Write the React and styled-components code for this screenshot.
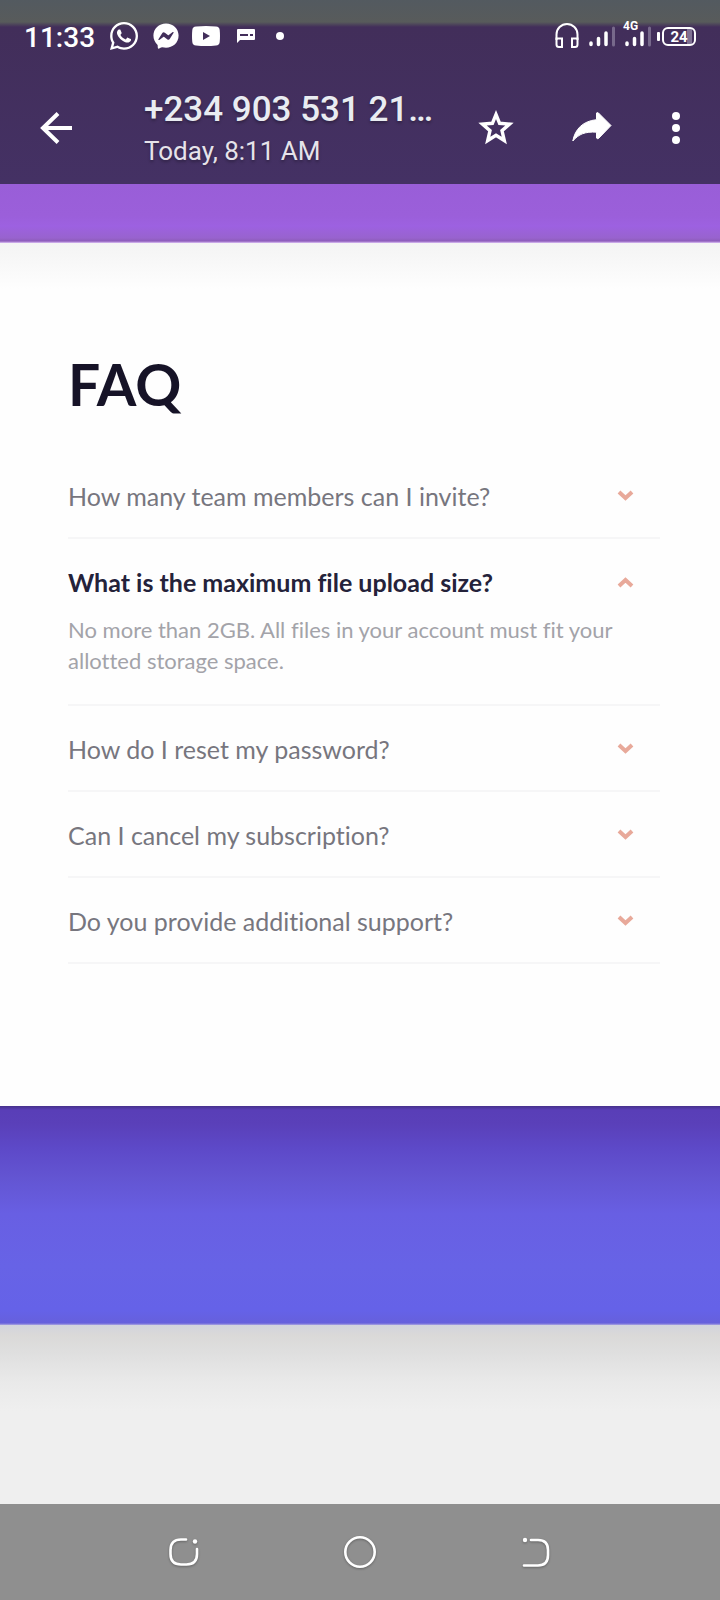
import React, { useState } from "react";
import styled, { createGlobalStyle } from "styled-components";
import { FaWhatsapp, FaFacebookMessenger } from "react-icons/fa";

const GlobalStyle = createGlobalStyle`
  *, *::before, *::after { box-sizing: border-box; }
  body { margin: 0; background: #efefef; }
  button { font: inherit; color: inherit; background: none; border: 0; padding: 0; margin: 0; cursor: pointer; }
  svg { display: block; flex: none; }
`;

const Screen = styled.div`
  display: flex;
  flex-direction: column;
  min-height: 100vh;
  font-family: Roboto, "Liberation Sans", sans-serif;
`;

const TopBar = styled.header`
  color: #fff;
  background: linear-gradient(#535a60 0, #585b5b 22px, #422e5a 27px, #443164 100%);
`;

const StatusBar = styled.div`
  display: flex;
  align-items: center;
  justify-content: space-between;
  height: 72px;
  padding: 0 24px;
`;

const StatusGroup = styled.div`
  display: flex;
  align-items: center;
  gap: ${(p) => p.$gap}px;
`;

const Notifications = styled(StatusGroup)`
  padding-left: 4px;
`;

const Clock = styled.time`
  padding-top: 3px;
  font-size: 28px;
  font-weight: 500;
  line-height: 32px;
`;

const MobileSignal = styled.span`
  position: relative;
  display: block;
`;

const NetworkType = styled.span`
  position: absolute;
  left: -2px;
  top: -5px;
  font-size: 12px;
  font-weight: 700;
  line-height: 12px;
`;

const Battery = styled.span`
  display: flex;
  align-items: center;
  gap: 2px;
  &::before {
    content: "";
    width: 3px;
    height: 9px;
    border-radius: 1px;
    background: #fff;
  }
`;

const BatteryLevel = styled.span`
  width: 34px;
  height: 19px;
  border: 2px solid #fff;
  border-radius: 6px;
  font-size: 15px;
  font-weight: 700;
  line-height: 16px;
  text-align: center;
  background: linear-gradient(90deg, transparent 23px, #7f7193 23px, #7f7193 28px, transparent 28px);
`;

const Toolbar = styled.div`
  display: flex;
  align-items: center;
  height: 112px;
  padding: 0 32px;
`;

const Heading = styled.div`
  flex: 1;
  min-width: 0;
  margin-left: 64px;
  padding-top: 4px;
  text-shadow: 0 2px 3px rgba(0, 0, 0, 0.3);
`;

const Title = styled.h1`
  margin: 0;
  font-size: 35px;
  font-weight: 500;
  line-height: 42px;
  color: #e9ecf1;
  white-space: nowrap;
`;

const Subtitle = styled.p`
  margin: 0;
  font-size: 26px;
  line-height: 40px;
  color: #e6e3ea;
`;

const Actions = styled.div`
  display: flex;
  align-items: center;
  gap: 48px;
`;

const IconButton = styled.button`
  display: grid;
  place-items: center;
  width: ${(p) => p.$width || 48}px;
  height: 48px;
`;

const PurpleStrip = styled.div`
  height: 59px;
  background: linear-gradient(#995ed8, #9b5fda 32px, #9d61e1 42px, #9863ce 54px, #8d5cba 57px, #dcc0f6 59px);
`;

const FaqSection = styled.main`
  padding: 105px 60px 142px 68px;
  font-family: Lato, "Open Sans", sans-serif;
  font-variant-ligatures: none;
  background: linear-gradient(#f4f4f4, #f8f8f8 20px, #fefefe 46px, #fefefe);
`;

const FaqTitle = styled.h2`
  margin: 0 0 33px;
  font-size: 57px;
  font-weight: 700;
  line-height: 72px;
  color: #161327;
`;

const FaqItem = styled.section`
  border-bottom: 2px solid #f6f6f7;
`;

const Question = styled.button`
  display: flex;
  align-items: center;
  justify-content: space-between;
  width: 100%;
  height: 84px;
  padding: 2px 26px 0 0;
  text-align: left;
  font-size: 25px;
  font-weight: ${(p) => (p.$open ? 700 : 400)};
  color: ${(p) => (p.$open ? "#24223a" : "#77767e")};
`;

const Answer = styled.p`
  margin: -9px 0 0;
  padding: 0 20px 28px 0;
  font-size: 22px;
  line-height: 31px;
  color: #a3a3a9;
`;

const Banner = styled.div`
  height: 219px;
  background: linear-gradient(#46318b 0, #593eb7 4px, #5a40b9 18px, #5d49c8 42px, #6355d2 72px, #685fe3 108px, #6763e6 160px, #6562e8 204px, #6660dc 217px, #a9a5e0 219px);
`;

const Backdrop = styled.div`
  flex: 1;
  min-height: 120px;
  background: linear-gradient(#d2d4dd, #dad9d8 10px, #dfdfdf 28px, #e9e9e9 56px, #efefef 86px);
`;

const NavBar = styled.nav`
  display: flex;
  align-items: center;
  justify-content: center;
  gap: 128px;
  height: 96px;
  background: #8f8f8f;
  color: #fff;
  svg { filter: drop-shadow(0 1px 1px rgba(0, 0, 0, 0.3)); }
`;

const YoutubeIcon = () => (
  <svg width="28" height="20" viewBox="0 0 28 20">
    <path fillRule="evenodd" fill="#fff" d="M4 .5Q14-.5 24 .5 27.4.8 27.7 4 28.3 10 27.7 16 27.4 19.2 24 19.5 14 20.5 4 19.5.6 19.2.3 16-.3 10 .3 4 .6.8 4 .5ZM11 6v8l7-4Z" />
  </svg>
);

const MessageIcon = () => (
  <svg width="18" height="14" viewBox="0 0 18 14">
    <path fillRule="evenodd" fill="#fff" d="M1 0h16q1 0 1 1v9q0 1-1 1H3l-3 3V1q0-1 1-1ZM3 5v2h8V5ZM13 5v2h3V5Z" />
  </svg>
);

const DotIcon = () => (
  <svg width="8" height="8" viewBox="0 0 8 8"><circle cx="4" cy="4" r="4" fill="#fff" /></svg>
);

const HeadphonesIcon = () => (
  <svg width="24" height="26" viewBox="0 0 24 26" fill="none" stroke="#fff" strokeWidth="2">
    <path d="M1.5 17V11.5a10.5 10.5 0 0 1 21 0V17" />
    <path d="M1.5 15.5H7V24H4Q1.5 24 1.5 21.5ZM22.5 15.5H17V24h3q2.5 0 2.5-2.5Z" />
  </svg>
);

const SignalIcon = () => (
  <svg width="26" height="22" viewBox="0 0 26 22" fill="none" stroke="#fff" strokeWidth="3" strokeLinecap="round">
    <path d="M2 18v1.5M9.500 13.500v6M17 8v11.500" strokeWidth="3.5" />
    <path d="M24.5 3v17" stroke="#77698b" />
  </svg>
);

const BackIcon = () => (
  <svg width="32" height="32" viewBox="0 0 32 32" fill="none" stroke="#fff" strokeWidth="4">
    <path d="M32 16H3M18 1.5 3 16 18 30.5" />
  </svg>
);

const StarIcon = () => (
  <svg width="36" height="36" viewBox="0 0 36 36" fill="none" stroke="#fff" strokeWidth="3.4" strokeLinejoin="miter">
    <path d="M18 4.500 21.600 13.300 31.500 14.100 24 20.600 26.300 30.500 18 25.300 9.700 30.500 12 20.600 4.500 14.100 14.400 13.300Z" />
  </svg>
);

const ForwardIcon = () => (
  <svg width="40" height="32" viewBox="0 0 40 32">
    <path fill="#fff" stroke="#fff" strokeWidth="1" strokeLinejoin="round" d="M24.5 1Q25 0 26.5 1L39 13.5 26.500 26.500Q25 27 24.500 26V20.200C13 19.500 7 22 .8 29 3 17 11 9 24.500 7.700Z" />
  </svg>
);

const MoreIcon = () => (
  <svg width="8" height="32" viewBox="0 0 8 32" fill="#fff">
    <circle cx="4" cy="4" r="4" /><circle cx="4" cy="16" r="4" /><circle cx="4" cy="28" r="4" />
  </svg>
);

const Chevron = ({ up }) => (
  <svg width="17" height="12" viewBox="0 0 17 12" fill="none" stroke="#e8a99a" strokeWidth="4">
    <path d={up ? "M2 10 8.5 4 15 10" : "M2 2 8.5 8 15 2"} />
  </svg>
);

const RecentsIcon = () => (
  <svg width="32" height="32" viewBox="0 0 32 32" fill="none" stroke="#fff" strokeWidth="2.6" strokeLinecap="round">
    <path d="M18 3.5H13Q2.5 3.5 2.5 14v4Q2.5 28.5 13 28.5h5.5Q29 28.5 29 18V13" />
    <circle cx="27" cy="5.5" r="2.2" fill="#fff" stroke="none" />
  </svg>
);

const HomeIcon = () => (
  <svg width="32" height="32" viewBox="0 0 32 32" fill="none" stroke="#fff" strokeWidth="2.6">
    <circle cx="16" cy="16" r="14.7" />
  </svg>
);

const BackNavIcon = () => (
  <svg width="32" height="32" viewBox="0 0 32 32" fill="none" stroke="#fff" strokeWidth="2.6" strokeLinecap="round">
    <path d="M11 4h7Q28 4 28 14v5Q28 29.5 18 29.5H4" />
    <circle cx="5" cy="4" r="2.2" fill="#fff" stroke="none" />
  </svg>
);

const FAQS = [
  { q: "How many team members can I invite?", a: "You can invite up to 2 additional users on the Free plan." },
  { q: "What is the maximum file upload size?", a: "No more than 2GB. All files in your account must fit your allotted storage space." },
  { q: "How do I reset my password?", a: "Click “Forgot password” from the login page." },
  { q: "Can I cancel my subscription?", a: "Yes! Send us a message and we’ll process your request." },
  { q: "Do you provide additional support?", a: "Chat and email support is available 24/7." },
];

export default function App() {
  const [open, setOpen] = useState(1);
  return (
    <Screen>
      <GlobalStyle />
      <TopBar>
        <StatusBar>
          <StatusGroup $gap={13}>
            <Clock>11:33</Clock>
            <FaWhatsapp size={32} />
            <FaFacebookMessenger size={26} />
            <YoutubeIcon />
            <Notifications $gap={21}>
              <MessageIcon />
              <DotIcon />
            </Notifications>
          </StatusGroup>
          <StatusGroup $gap={10}>
            <HeadphonesIcon />
            <SignalIcon />
            <StatusGroup $gap={6}>
              <MobileSignal>
                <SignalIcon />
                <NetworkType>4G</NetworkType>
              </MobileSignal>
              <Battery><BatteryLevel>24</BatteryLevel></Battery>
            </StatusGroup>
          </StatusGroup>
        </StatusBar>
        <Toolbar>
          <IconButton aria-label="Back"><BackIcon /></IconButton>
          <Heading>
            <Title>+234 903 531 21…</Title>
            <Subtitle>Today, 8:11 AM</Subtitle>
          </Heading>
          <Actions>
            <IconButton aria-label="Star"><StarIcon /></IconButton>
            <IconButton aria-label="Forward"><ForwardIcon /></IconButton>
            <IconButton $width={24} aria-label="More options"><MoreIcon /></IconButton>
          </Actions>
        </Toolbar>
      </TopBar>
      <PurpleStrip />
      <FaqSection>
        <FaqTitle>FAQ</FaqTitle>
        {FAQS.map((item, i) => (
          <FaqItem key={item.q}>
            <Question $open={open === i} aria-expanded={open === i} onClick={() => setOpen(open === i ? -1 : i)}>
              {item.q}
              <Chevron up={open === i} />
            </Question>
            {open === i && <Answer>{item.a}</Answer>}
          </FaqItem>
        ))}
      </FaqSection>
      <Banner />
      <Backdrop />
      <NavBar aria-label="System">
        <IconButton aria-label="Recent apps"><RecentsIcon /></IconButton>
        <IconButton aria-label="Home"><HomeIcon /></IconButton>
        <IconButton aria-label="Go back"><BackNavIcon /></IconButton>
      </NavBar>
    </Screen>
  );
}
